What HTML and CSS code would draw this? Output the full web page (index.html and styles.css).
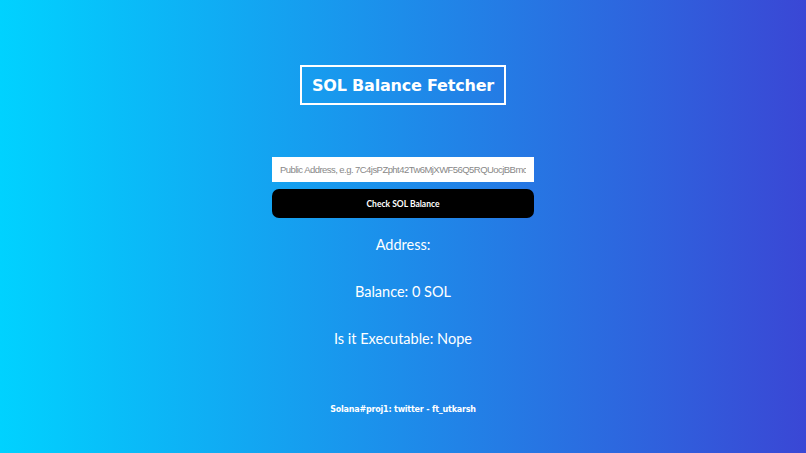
FILE: index.html
```html
<!DOCTYPE html>
<html>
<head>
<meta charset="utf-8">
<link rel="stylesheet" href="styles.css">
</head>
<body>
<main class="page">
  <h1 class="title">SOL Balance Fetcher</h1>
  <form class="form">
    <input class="address-input" type="text" placeholder="Public Address, e.g. 7C4jsPZpht42Tw6MjXWF56Q5RQUocjBBmciUx5FwHCi4">
    <button class="check-btn" type="button">Check SOL Balance</button>
  </form>
  <div class="results">
    <p class="result">Address: </p>
    <p class="result">Balance: 0 SOL</p>
    <p class="result">Is it Executable: Nope</p>
  </div>
  <footer class="footer">Solana#proj1: twitter - ft_utkarsh</footer>
</main>
</body>
</html>
```

FILE: styles.css
```css
html, body {
  margin: 0;
  padding: 0;
  height: 100%;
}
body {
  background: linear-gradient(90deg, #00d2ff 0%, #3a47d5 100%);
  color: #fff;
  font-family: "Lato", "Open Sans", sans-serif;
}
.page {
  display: flex;
  flex-direction: column;
  align-items: center;
  padding-top: 65px;
}
.title {
  margin: 0;
  border: 2px solid #fff;
  width: 206px;
  height: 40px;
  box-sizing: border-box;
  display: flex;
  align-items: center;
  justify-content: center;
  font-family: "DejaVu Sans", sans-serif;
  font-weight: 700;
  font-size: 16px;
  letter-spacing: -0.2px;
}
.form {
  margin-top: 52px;
  display: flex;
  flex-direction: column;
  gap: 7px;
  width: 262px;
}
.address-input {
  height: 25px;
  box-sizing: border-box;
  border: none;
  padding: 0 8px;
  font-family: "Liberation Sans", Arial, sans-serif;
  font-size: 9.5px;
  letter-spacing: -0.55px;
  color: #333;
  background: #fff;
  outline: none;
}
.address-input::placeholder {
  color: #888;
}
.check-btn {
  height: 29px;
  border: none;
  border-radius: 7px;
  background: #000;
  color: #fff;
  font-family: "Lato", sans-serif;
  font-weight: 700;
  font-size: 8.5px;
}
.results {
  margin-top: 16px;
  display: flex;
  flex-direction: column;
  align-items: center;
  gap: 26px;
}
.result {
  margin: 0;
  font-size: 14.5px;
  line-height: 21px;
}
.footer {
  margin-top: 56px;
  font-family: "DejaVu Sans", sans-serif;
  font-weight: 700;
  font-size: 8px;
  letter-spacing: -0.2px;
}
```
